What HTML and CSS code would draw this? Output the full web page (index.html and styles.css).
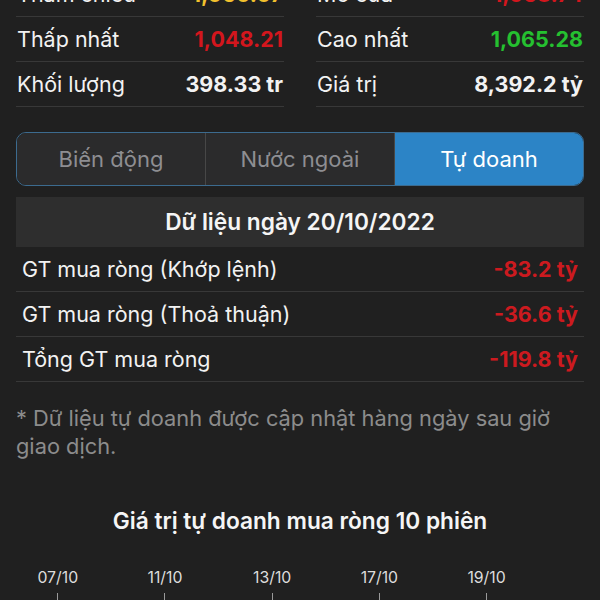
FILE: index.html
```html
<!DOCTYPE html>
<html lang="vi">
<head>
    <meta charset="UTF-8">
    <meta name="viewport" content="width=device-width, initial-scale=1.0">
    <title>Tự doanh</title>
    <link rel="stylesheet" href="styles.css">
</head>
<body>
    <main class="screen">
        <section class="stats">
            <div class="stats-col">
                <div class="stat-row"><span>Tham chiếu</span><b class="ref">1,060.07</b></div>
                <div class="stat-row"><span>Thấp nhất</span><b class="down">1,048.21</b></div>
                <div class="stat-row"><span>Khối lượng</span><b>398.33 tr</b></div>
            </div>
            <div class="stats-col">
                <div class="stat-row"><span>Mở cửa</span><b class="down">1,058.74</b></div>
                <div class="stat-row"><span>Cao nhất</span><b class="up">1,065.28</b></div>
                <div class="stat-row"><span>Giá trị</span><b>8,392.2 tỷ</b></div>
            </div>
        </section>

        <nav class="segments">
            <button class="segment">Biến động</button>
            <button class="segment">Nước ngoài</button>
            <button class="segment active">Tự doanh</button>
        </nav>

        <section class="daily">
            <h2 class="daily-head">Dữ liệu ngày 20/10/2022</h2>
            <div class="daily-row"><span>GT mua ròng (Khớp lệnh)</span><b>-83.2 tỷ</b></div>
            <div class="daily-row"><span>GT mua ròng (Thoả thuận)</span><b>-36.6 tỷ</b></div>
            <div class="daily-row"><span>Tổng GT mua ròng</span><b>-119.8 tỷ</b></div>
        </section>

        <p class="note">* Dữ liệu tự doanh được cập nhật hàng ngày sau giờ giao dịch.</p>

        <section class="chart">
            <h3 class="chart-title">Giá trị tự doanh mua ròng 10 phiên</h3>
            <div class="axis">
                <div class="tick"><span>07/10</span></div>
                <div class="tick blank"></div>
                <div class="tick"><span>11/10</span></div>
                <div class="tick blank"></div>
                <div class="tick"><span>13/10</span></div>
                <div class="tick blank"></div>
                <div class="tick"><span>17/10</span></div>
                <div class="tick blank"></div>
                <div class="tick"><span>19/10</span></div>
                <div class="tick blank"></div>
            </div>
        </section>
    </main>
</body>
</html>
```

FILE: styles.css
```css
html, body {
    margin: 0;
    padding: 0;
    background-color: #202020;
}

body {
    color: #f2f2f2;
    font-family: Inter, "Noto Sans", sans-serif;
    overflow: hidden;
}

.screen {
    padding: 0 16px 20px;
    transform: translateY(-28px);
}

/* price summary */
.stats {
    display: grid;
    grid-template-columns: 1fr 1fr;
    column-gap: 32px;
}

.stat-row {
    display: flex;
    justify-content: space-between;
    align-items: center;
    height: 44px;
    border-bottom: 1px solid #383838;
    font-size: 21.5px;
    padding: 0 1px;
}

.stat-row b {
    font-weight: 700;
}

.ref {
    color: #f2c12e;
}

.down {
    color: #d3161d;
}

.up {
    color: #25c030;
}

/* tabs */
.segments {
    display: flex;
    margin-top: 25px;
    height: 54px;
    border: 1.5px solid #3c6b8f;
    border-radius: 10px;
    overflow: hidden;
    box-sizing: border-box;
}

.segment {
    flex: 1;
    border: none;
    border-right: 1px solid #474747;
    background-color: #2b2b2c;
    color: #8e8e92;
    font-family: inherit;
    font-size: 22px;
    padding: 0;
}

.segment:last-child {
    border-right: none;
}

.segment.active {
    background-color: #2c84c6;
    color: #ffffff;
}

/* daily data */
.daily {
    margin-top: 11px;
}

.daily-head {
    margin: 0;
    height: 50px;
    line-height: 50px;
    background-color: #2e2e2e;
    text-align: center;
    font-size: 22.7px;
    font-weight: 600;
    color: #f5f5f5;
}

.daily-row {
    display: flex;
    justify-content: space-between;
    align-items: center;
    height: 44px;
    padding: 0 6px;
    border-bottom: 1px solid #383838;
    font-size: 21.5px;
}

.daily-row b {
    color: #cc1a1f;
    font-weight: 700;
}

.note {
    margin: 22px 0 0;
    padding-right: 20px;
    font-size: 21.8px;
    line-height: 28px;
    color: #8c8c8c;
}

/* chart */
.chart {
    margin-top: 47px;
}

.chart-title {
    margin: 0;
    text-align: center;
    font-size: 22.7px;
    font-weight: 600;
    color: #f5f5f5;
    line-height: 28px;
}

.axis {
    display: flex;
    margin-top: 34px;
    margin-left: 15px;
}

.tick {
    width: 53.6px;
    display: flex;
    flex-direction: column;
    align-items: center;
    font-size: 15.8px;
    color: #dddddd;
}

.tick span {
    line-height: 18px;
}

.tick::after {
    content: "";
    width: 1px;
    height: 12px;
    margin-top: 6px;
    background-color: #9a9a9a;
}

.tick.blank::after {
    display: none;
}
```
